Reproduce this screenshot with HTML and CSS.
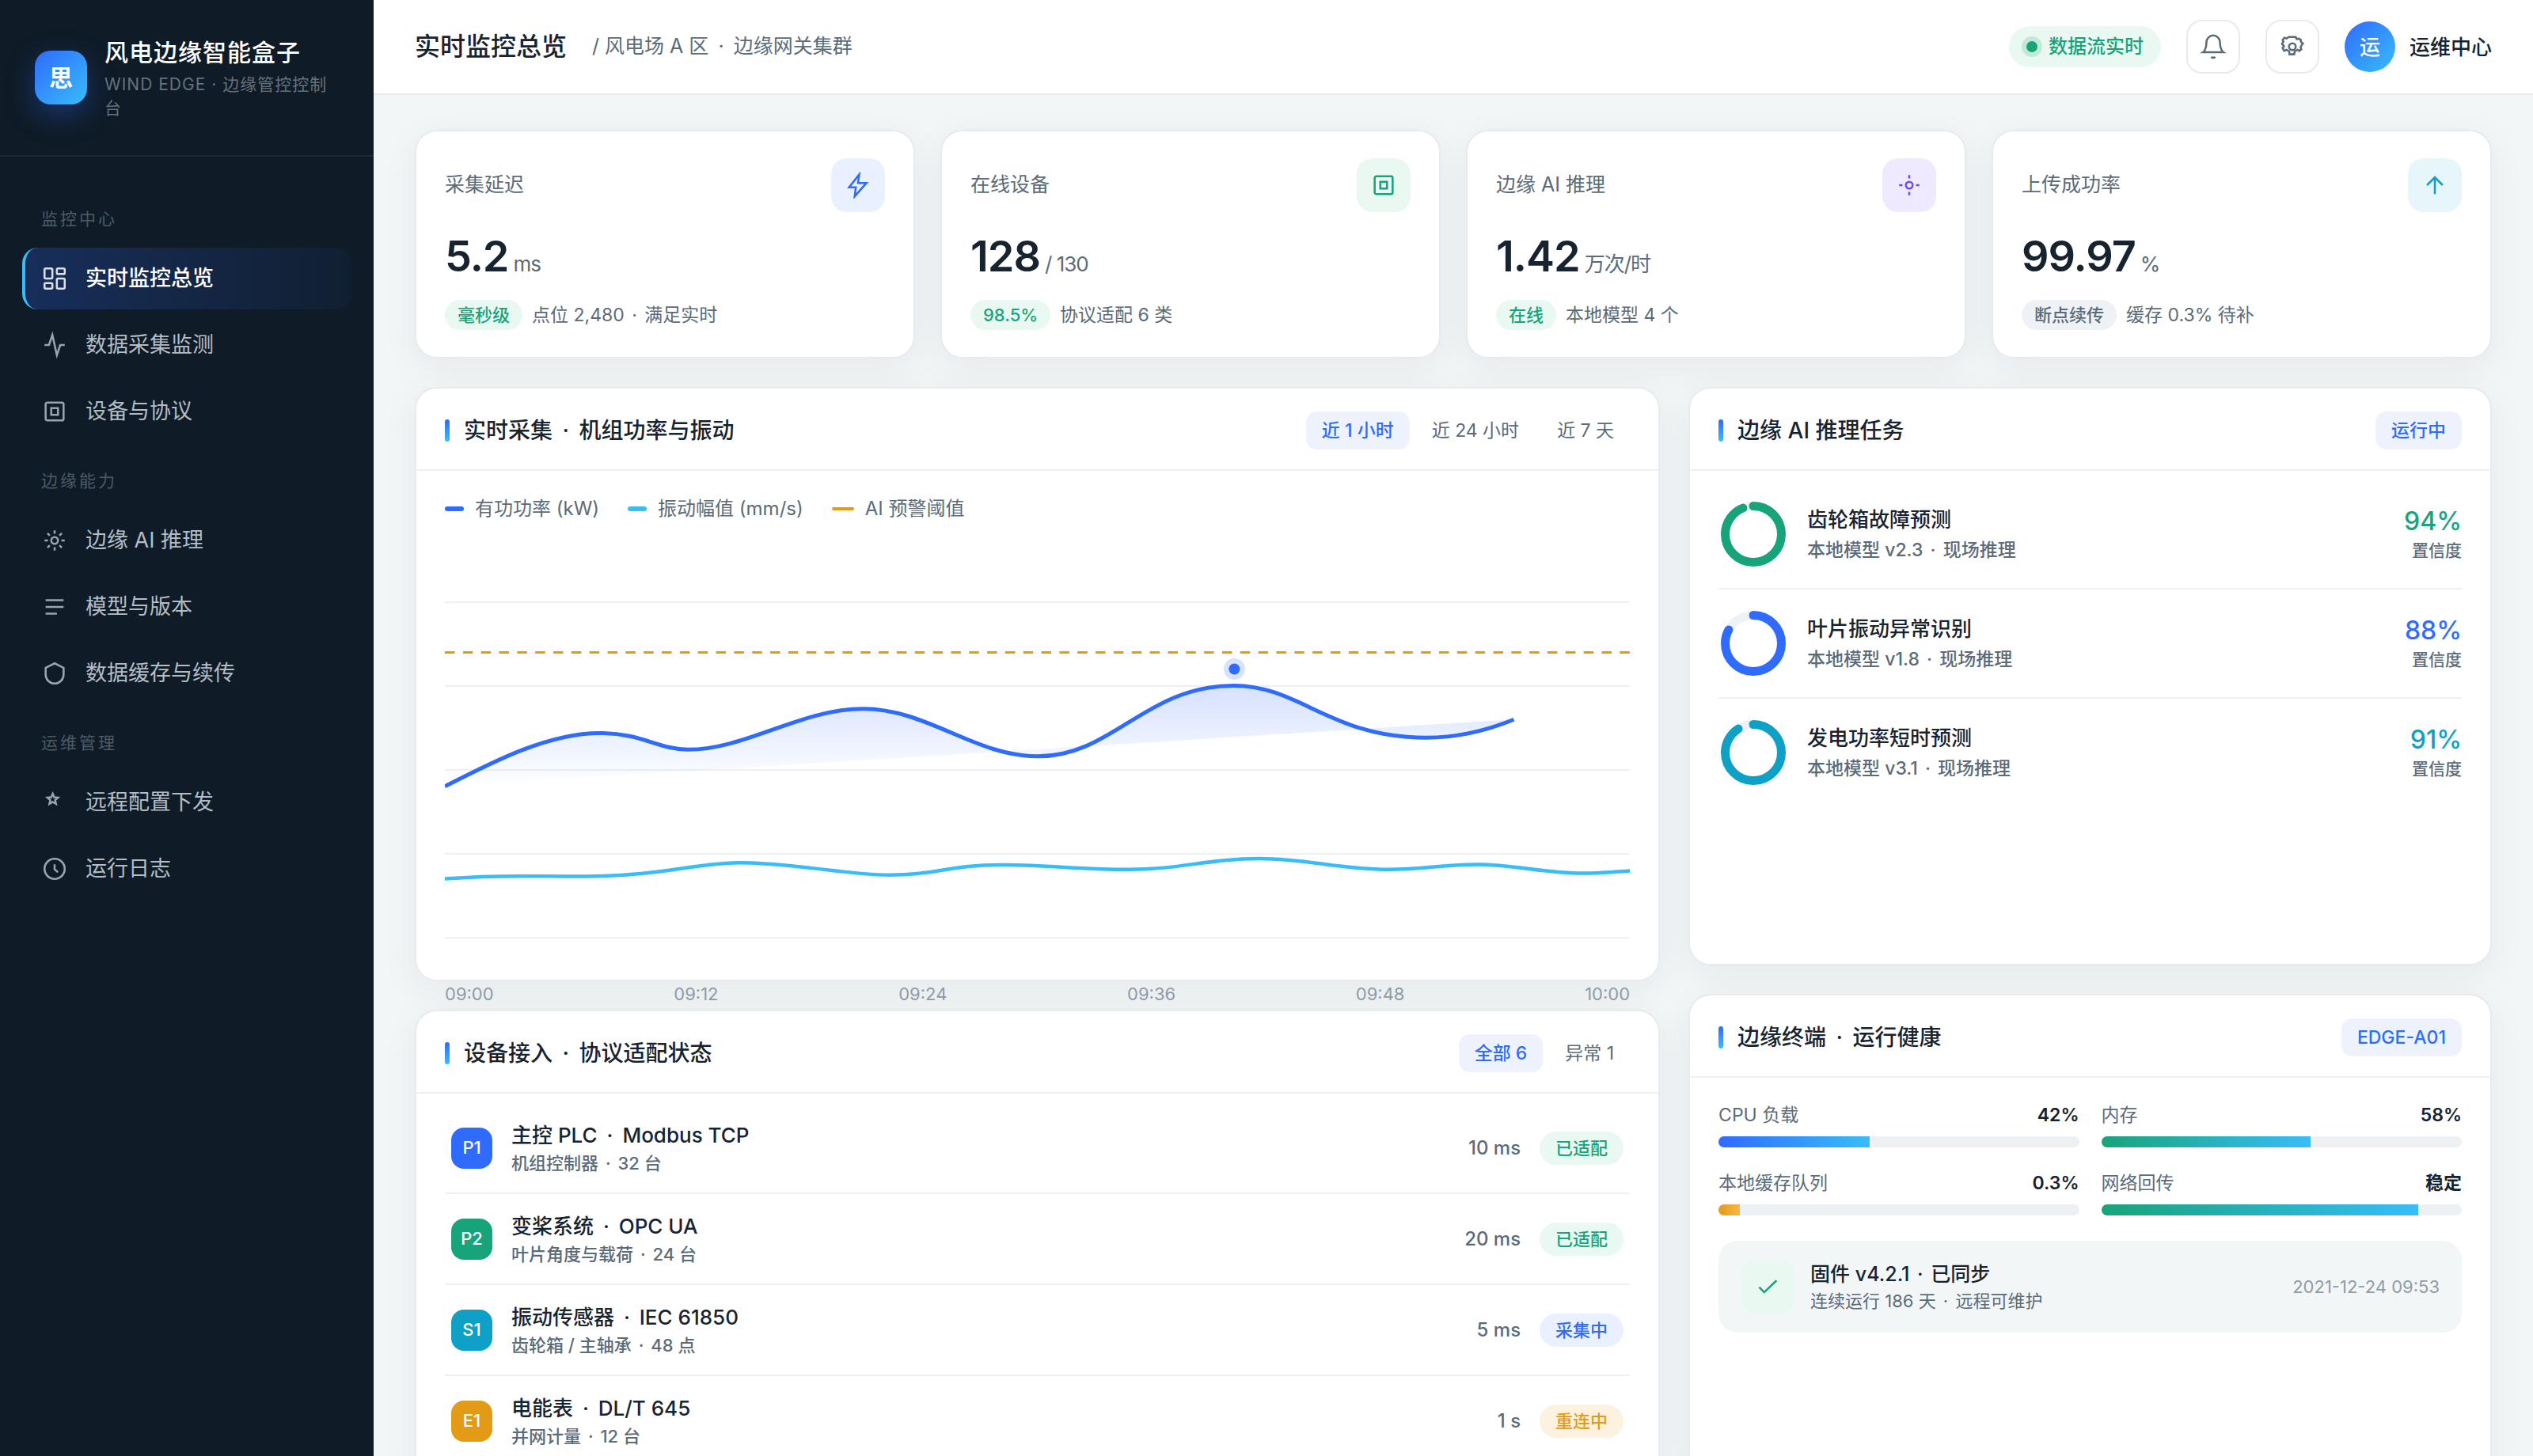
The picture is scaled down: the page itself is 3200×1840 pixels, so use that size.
FILE: index.html
```html
<!DOCTYPE html>
<html lang="zh-CN">
<head>
<meta charset="utf-8">
<meta name="viewport" content="width=device-width, initial-scale=1">
<title>风电边缘智能盒子</title>
<link rel="stylesheet" href="styles.css">
</head>
<body>
<div class="app">
  <aside class="sidebar">
    <div class="brand">
      <div class="brand-logo">思</div>
      <div class="brand-text">
        <div class="brand-name">风电边缘智能盒子</div>
        <div class="brand-sub">WIND EDGE · 边缘管控控制台</div>
      </div>
    </div>
    <nav class="nav">
      <div class="nav-label">监控中心</div>
      <div class="nav-group">
        <a class="nav-item active" href="#"><svg class="icon" viewBox="0 0 24 24"><rect x="3" y="3" width="7" height="9" rx="1"/><rect x="14" y="3" width="7" height="5" rx="1"/><rect x="14" y="12" width="7" height="9" rx="1"/><rect x="3" y="16" width="7" height="5" rx="1"/></svg>实时监控总览</a>
        <a class="nav-item" href="#"><svg class="icon" viewBox="0 0 24 24"><path d="M3 12h4l3-9 4 18 3-9h4"/></svg>数据采集监测</a>
        <a class="nav-item" href="#"><svg class="icon" viewBox="0 0 24 24"><rect x="4" y="4" width="16" height="16" rx="1.5"/><rect x="9" y="9" width="6" height="6"/></svg>设备与协议</a>
      </div>
      <div class="nav-label">边缘能力</div>
      <div class="nav-group">
        <a class="nav-item" href="#"><svg class="icon" viewBox="0 0 24 24"><circle cx="12" cy="12" r="3"/><path d="M12 3v3M12 18v3M3 12h3M18 12h3M5.6 5.6l2.1 2.1M16.3 16.3l2.1 2.1M5.6 18.4l2.1-2.1M16.3 7.7l2.1-2.1"/></svg>边缘 AI 推理</a>
        <a class="nav-item" href="#"><svg class="icon" viewBox="0 0 24 24"><path d="M4 6h16M4 12h16M4 18h10"/></svg>模型与版本</a>
        <a class="nav-item" href="#"><svg class="icon" viewBox="0 0 24 24"><path d="M12 3l8 4v6c0 4.5-3.6 8-8 8s-8-3.5-8-8V7z"/></svg>数据缓存与续传</a>
      </div>
      <div class="nav-label">运维管理</div>
      <div class="nav-group">
        <a class="nav-item" href="#"><svg class="icon" viewBox="0 0 24 24"><path d="M10.3 4.3l1.35 3.1 3.4.35-2.55 2.25.7 3.3-2.9-1.7-2.9 1.7.7-3.3-2.55-2.25 3.4-.35z"/></svg>远程配置下发</a>
        <a class="nav-item" href="#"><svg class="icon" viewBox="0 0 24 24"><circle cx="12" cy="12" r="9"/><path d="M12 8v4.5l3 2.5"/></svg>运行日志</a>
      </div>
    </nav>
  </aside>

  <div class="main">
    <header class="topbar">
      <h1 class="page-title">实时监控总览</h1>
      <span class="crumb">/ 风电场 A 区 <i class="sep wide">·</i> 边缘网关集群</span>
      <div class="topbar-actions">
        <span class="live"><i class="live-dot"></i>数据流实时</span>
        <button class="icon-btn" type="button" aria-label="通知"><svg class="icon" viewBox="0 0 24 24"><path d="M18 8A6 6 0 0 0 6 8c0 7-3 9-3 9h18s-3-2-3-9M13.7 21a2 2 0 0 1-3.4 0"/></svg></button>
        <button class="icon-btn" type="button" aria-label="设置"><svg class="icon" viewBox="0 0 24 24"><circle cx="12" cy="12" r="3"/><path d="M8.9 3.3H15l.8 1.9 2.1-.3 1.6 1 .3 2.1 1.6 1.2-1.2 1.6-.9 1.9.7 1.7-1.900 1.400-1.600-1-2.400 1.400-.5 2.600H9.400l-.2-2.600-2.400-1.400-2.100 1-1.400-2.600 1.200-1.700-1.700-2.100L4 7.500l-.7-1.600L4.900 4l1.900.7z"/></svg></button>
        <div class="user"><span class="avatar">运</span><span>运维中心</span></div>
      </div>
    </header>

    <main class="content">
      <section class="kpis">
        <article class="card kpi">
          <div class="kpi-top"><span>采集延迟</span><span class="kpi-icon blue"><svg class="icon" viewBox="0 0 24 24"><path d="M13 2.5L4 14h6l-1 8 10.5-12H12z"/></svg></span></div>
          <div class="kpi-value">5.2<small>ms</small></div>
          <div class="kpi-foot"><span class="chip green">毫秒级</span><span>点位 2,480 <i class="sep">·</i> 满足实时</span></div>
        </article>
        <article class="card kpi">
          <div class="kpi-top"><span>在线设备</span><span class="kpi-icon green"><svg class="icon" viewBox="0 0 24 24"><rect x="4" y="4" width="16" height="16" rx="1.5"/><rect x="9" y="9" width="6" height="6"/></svg></span></div>
          <div class="kpi-value">128<small>/ 130</small></div>
          <div class="kpi-foot"><span class="chip green">98.5%</span><span>协议适配 6 类</span></div>
        </article>
        <article class="card kpi">
          <div class="kpi-top"><span>边缘 AI 推理</span><span class="kpi-icon purple"><svg class="icon" viewBox="0 0 24 24"><circle cx="12" cy="12" r="3"/><path d="M12 3v3M12 18v3M3 12h3M18 12h3"/></svg></span></div>
          <div class="kpi-value">1.42<small>万次/时</small></div>
          <div class="kpi-foot"><span class="chip green">在线</span><span>本地模型 4 个</span></div>
        </article>
        <article class="card kpi">
          <div class="kpi-top"><span>上传成功率</span><span class="kpi-icon cyan"><svg class="icon" viewBox="0 0 24 24"><path d="M12 20V5M5 12l7-7 7 7"/></svg></span></div>
          <div class="kpi-value">99.97<small>%</small></div>
          <div class="kpi-foot"><span class="chip gray">断点续传</span><span>缓存 0.3% 待补</span></div>
        </article>
      </section>

      <div class="columns">
        <div class="column">
          <section class="card">
            <div class="panel-head">
              <h2><span>实时采集 <i class="sep wide">·</i> 机组功率与振动</span></h2>
              <div class="tabs"><button class="tab on" type="button">近 1 小时</button><button class="tab" type="button">近 24 小时</button><button class="tab" type="button">近 7 天</button></div>
            </div>
            <div class="chart-body">
              <div class="legend">
                <span><i class="swatch power"></i>有功功率 (kW)</span>
                <span><i class="swatch vibration"></i>振动幅值 (mm/s)</span>
                <span><i class="swatch threshold"></i>AI 预警阈值</span>
              </div>
              <svg class="chart" viewBox="0 0 1498 563" preserveAspectRatio="none">
                <defs><linearGradient id="area" x1="0" y1="0" x2="0" y2="1"><stop offset="0" stop-color="#2f6bff" stop-opacity=".2"/><stop offset="1" stop-color="#2f6bff" stop-opacity="0"/></linearGradient></defs>
                <g transform="translate(0 25)" fill="none">
                  <path d="M0 61H1498M0 167H1498M0 273H1498M0 379H1498M0 485H1498" stroke="#eef1f4" stroke-width="2"/>
                  <path d="M0 124.5H1498" stroke="#e39b16" stroke-width="3" stroke-dasharray="12.5 10.35"/>
                  <path fill="url(#area)" d="M0 293.8C60 263 130 226.4 195.6 226.4C250 226.4 270 247.3 307.6 247.3C380 247.3 450 195.8 528.8 195.8C610 195.8 670 255.8 749.8 255.8C845 255.8 885 166.4 997.8 166.4C1080 166.4 1120 232.2 1239.9 232.2C1280 232.2 1315 224 1351.3 209.2z"/>
                  <path stroke="#2f6bff" stroke-width="5" d="M0 293.8C60 263 130 226.4 195.6 226.4C250 226.4 270 247.3 307.6 247.3C380 247.3 450 195.8 528.8 195.8C610 195.8 670 255.8 749.8 255.8C845 255.8 885 166.4 997.8 166.4C1080 166.4 1120 232.2 1239.9 232.2C1280 232.2 1315 224 1351.3 209.2"/>
                  <path stroke="#38bdf8" stroke-width="4.5" d="M0 410.6C40 407.5 70 406.9 110 407.2C130 407.3 150 407.6 179 407.5C275 407 320 390.3 371 390.3C440 390.3 510 405.8 562 405.8C620 405.8 640 393 701 393C760 393 805 398.8 864 398.8C930 398.8 965 385 1030 385C1090 385 1130 398.8 1193 398.8C1240 398.8 1260 392.4 1306 392.4C1350 392.4 1390 403.6 1440 403.6C1465 403.6 1480 401.5 1498 400.4"/>
                  <circle cx="998" cy="145.5" r="13.5" fill="#d6e2ff"/><circle cx="998" cy="145.5" r="7" fill="#2f6bff"/>
                </g>
              </svg>
              <div class="axis"><span>09:00</span><span>09:12</span><span>09:24</span><span>09:36</span><span>09:48</span><span>10:00</span></div>
            </div>
          </section>

          <section class="card">
            <div class="panel-head">
              <h2><span>设备接入 <i class="sep wide">·</i> 协议适配状态</span></h2>
              <div class="tabs"><button class="tab on" type="button">全部 6</button><button class="tab" type="button">异常 1</button></div>
            </div>
            <ul class="rows">
              <li class="device"><span class="tag t-blue">P1</span><div class="info"><b>主控 PLC <i class="sep wide">·</i> Modbus TCP</b><span>机组控制器 <i class="sep">·</i> 32 台</span></div><span class="rate">10 ms</span><span class="status green">已适配</span></li>
              <li class="device"><span class="tag t-green">P2</span><div class="info"><b>变桨系统 <i class="sep wide">·</i> OPC UA</b><span>叶片角度与载荷 <i class="sep">·</i> 24 台</span></div><span class="rate">20 ms</span><span class="status green">已适配</span></li>
              <li class="device"><span class="tag t-cyan">S1</span><div class="info"><b>振动传感器 <i class="sep wide">·</i> IEC 61850</b><span>齿轮箱 / 主轴承 <i class="sep">·</i> 48 点</span></div><span class="rate">5 ms</span><span class="status blue">采集中</span></li>
              <li class="device"><span class="tag t-amber">E1</span><div class="info"><b>电能表 <i class="sep wide">·</i> DL/T 645</b><span>并网计量 <i class="sep">·</i> 12 台</span></div><span class="rate">1 s</span><span class="status amber">重连中</span></li>
            </ul>
          </section>
        </div>

        <div class="column">
          <section class="card tasks">
            <div class="panel-head"><h2>边缘 AI 推理任务</h2><div class="tabs"><button class="tab on" type="button">运行中</button></div></div>
            <ul class="rows">
              <li class="task c-green"><svg class="ring" viewBox="0 0 88 88"><circle class="track" cx="44" cy="44" r="35.5"/><circle class="arc" cx="44" cy="44" r="35.5" pathLength="100" stroke-dasharray="94 100"/></svg><div class="info"><b>齿轮箱故障预测</b><span>本地模型 v2.3 <i class="sep">·</i> 现场推理</span></div><div class="score"><strong>94%</strong><span>置信度</span></div></li>
              <li class="task c-blue"><svg class="ring" viewBox="0 0 88 88"><circle class="track" cx="44" cy="44" r="35.5"/><circle class="arc" cx="44" cy="44" r="35.5" pathLength="100" stroke-dasharray="83 100"/></svg><div class="info"><b>叶片振动异常识别</b><span>本地模型 v1.8 <i class="sep">·</i> 现场推理</span></div><div class="score"><strong>88%</strong><span>置信度</span></div></li>
              <li class="task c-cyan"><svg class="ring" viewBox="0 0 88 88"><circle class="track" cx="44" cy="44" r="35.5"/><circle class="arc" cx="44" cy="44" r="35.5" pathLength="100" stroke-dasharray="91 100"/></svg><div class="info"><b>发电功率短时预测</b><span>本地模型 v3.1 <i class="sep">·</i> 现场推理</span></div><div class="score"><strong>91%</strong><span>置信度</span></div></li>
            </ul>
          </section>

          <section class="card grow">
            <div class="panel-head"><h2><span>边缘终端 <i class="sep wide">·</i> 运行健康</span></h2><div class="tabs"><button class="tab on" type="button">EDGE-A01</button></div></div>
            <div class="health">
              <div class="meters">
                <div class="meter"><div class="meter-top"><span>CPU 负载</span><b>42%</b></div><div class="bar"><i class="f-blue" style="width:42%"></i></div></div>
                <div class="meter"><div class="meter-top"><span>内存</span><b>58%</b></div><div class="bar"><i class="f-green" style="width:58%"></i></div></div>
                <div class="meter"><div class="meter-top"><span>本地缓存队列</span><b>0.3%</b></div><div class="bar"><i class="f-amber" style="width:6%"></i></div></div>
                <div class="meter"><div class="meter-top"><span>网络回传</span><b>稳定</b></div><div class="bar"><i class="f-green" style="width:88%"></i></div></div>
              </div>
              <div class="firmware">
                <span class="kpi-icon green"><svg class="icon" viewBox="0 0 24 24"><path d="M4.5 12.5L9 17 20 6.5"/></svg></span>
                <div class="info"><b>固件 v4.2.1 <i class="sep">·</i> 已同步</b><span>连续运行 186 天 <i class="sep">·</i> 远程可维护</span></div>
                <time>2021-12-24 09:53</time>
              </div>
            </div>
          </section>
        </div>
      </div>
    </main>
  </div>
</div>
</body>
</html>
```
FILE: styles.css
```css
:root {
  --ink: #17232f;
  --muted: #5b6b78;
  --faint: #8f9ca8;
  --line: #e6ebef;
  --line-soft: #eef1f4;
  --bg: #f3f6f7;
  --blue: #2f6bff;
  --sky: #38bdf8;
  --green: #18a47a;
  --cyan: #0ea0c6;
  --amber: #e39b16;
}

* { box-sizing: border-box; }

body {
  margin: 0;
  background: var(--bg);
  color: var(--ink);
  font: 26px/1.5 Inter, "Noto Sans CJK SC", sans-serif;
}

h1, h2, ul { margin: 0; padding: 0; font-weight: 500; }
ul { list-style: none; }
b, strong { font-weight: 500; }
button { font: inherit; color: inherit; border: 0; background: none; padding: 0; cursor: pointer; }
a { color: inherit; text-decoration: none; }

.sep { margin: 0 3px; font-style: normal; }
.sep.wide { margin: 0 5px; }

.icon {
  width: 34px;
  height: 34px;
  flex: none;
  fill: none;
  stroke: currentColor;
  stroke-width: 1.8;
}

.app { display: flex; height: 100vh; overflow: hidden; }

/* Sidebar */
.sidebar { width: 472px; flex: none; background: #0f1b26; color: #b3bdc6; }

.brand {
  display: flex;
  align-items: center;
  gap: 22px;
  padding: 44px;
  border-bottom: 2px solid #1d2935;
}
.brand-logo {
  display: grid;
  place-items: center;
  flex: none;
  width: 66px;
  height: 68px;
  border-radius: 20px;
  background: linear-gradient(135deg, var(--blue), var(--sky));
  box-shadow: 0 12px 36px rgba(47, 107, 255, .35);
  color: #fff;
  font-size: 30px;
  font-weight: 700;
}
.brand-name { color: #fff; font-size: 30px; font-weight: 500; line-height: 44px; letter-spacing: 1px; }
.brand-sub { margin-top: 4px; color: #65727e; font-size: 21px; line-height: 30px; letter-spacing: 1px; }

.nav { padding: 30px 28px; }
.nav-label { padding: 32px 24px 20px; color: #4d5b67; font-size: 21px; line-height: 33px; letter-spacing: 3px; }
.nav-group { display: flex; flex-direction: column; gap: 6px; }
.nav-item {
  display: flex;
  align-items: center;
  gap: 22px;
  height: 78px;
  padding: 0 20px;
  border-left: 4px solid transparent;
  border-radius: 20px;
  font-size: 27px;
}
.nav-item .icon { opacity: .85; }
.nav-item.active {
  border-left-color: var(--sky);
  background: linear-gradient(90deg, rgba(47, 107, 255, .24), rgba(47, 107, 255, .05));
  color: #fff;
  font-weight: 500;
}

/* Top bar */
.main { flex: 1; min-width: 0; }
.topbar {
  display: flex;
  align-items: center;
  gap: 32px;
  height: 120px;
  padding: 0 52px;
  border-bottom: 2px solid var(--line);
  background: #fff;
}
.page-title { font-size: 32px; }
.crumb { color: var(--muted); font-size: 25px; }
.topbar-actions { display: flex; align-items: center; gap: 32px; margin-left: auto; }
.live {
  display: flex;
  align-items: center;
  gap: 14px;
  padding: 8px 22px;
  border-radius: 27px;
  background: #e9f8f1;
  color: var(--green);
  font-size: 24px;
  font-weight: 500;
}
.live-dot { width: 14px; height: 14px; border-radius: 50%; background: var(--green); box-shadow: 0 0 0 6px rgba(24, 164, 122, .18); }
.icon-btn {
  display: grid;
  place-items: center;
  width: 68px;
  height: 68px;
  border: 2px solid var(--line);
  border-radius: 20px;
  color: var(--muted);
}
.user { display: flex; align-items: center; gap: 18px; font-weight: 500; }
.avatar {
  display: grid;
  place-items: center;
  width: 64px;
  height: 64px;
  border-radius: 50%;
  background: linear-gradient(135deg, var(--blue), var(--sky));
  color: #fff;
}

/* Content */
.content { display: flex; flex-direction: column; gap: 36px; padding: 44px 52px; }
.card {
  border: 2px solid var(--line);
  border-radius: 28px;
  background: #fff;
  box-shadow: 0 12px 48px rgba(18, 38, 56, .06);
}

.kpis { display: grid; grid-template-columns: repeat(4, 1fr); gap: 32px; }
.kpi { padding: 34px 36px; }
.kpi-top { display: flex; align-items: center; justify-content: space-between; color: var(--muted); font-size: 25px; }
.kpi-icon { display: grid; place-items: center; flex: none; width: 68px; height: 68px; border-radius: 20px; }
.kpi-value {
  display: flex;
  align-items: baseline;
  gap: 6px;
  margin: 21px 0;
  font-size: 54px;
  font-weight: 600;
  line-height: 69px;
  letter-spacing: -1px;
}
.kpi-value small { color: var(--muted); font-size: 26px; font-weight: 400; line-height: 32px; }
.kpi-foot { display: flex; align-items: center; gap: 12px; color: var(--muted); font-size: 23px; line-height: 38px; }
.chip { padding: 0 16px; border-radius: 19px; font-size: 22px; font-weight: 500; }

.green { background: #e9f8f1; color: var(--green); }
.blue { background: #e9f0ff; color: var(--blue); }
.purple { background: #efeaff; color: #6d4df2; }
.cyan { background: #e6f6fb; color: var(--cyan); }
.gray { background: #eef2f7; color: var(--muted); }
.amber { background: #fdf1df; color: var(--amber); }

.columns { display: grid; grid-template-columns: 1.55fr 1fr; gap: 36px; }
.column { display: flex; flex-direction: column; gap: 36px; min-width: 0; }
.grow { flex: 1; }

.panel-head {
  display: flex;
  align-items: center;
  justify-content: space-between;
  height: 104px;
  padding: 4px 36px 0;
  border-bottom: 2px solid var(--line-soft);
}
.panel-head h2 { display: flex; align-items: center; gap: 18px; font-size: 28px; }
.panel-head h2::before {
  content: "";
  width: 6px;
  height: 28px;
  border-radius: 3px;
  background: linear-gradient(var(--blue), var(--sky));
}
.tabs { display: flex; gap: 8px; }
.tab { padding: 6px 20px; border-radius: 14px; color: var(--muted); font-size: 23px; line-height: 36px; }
.tab.on { background: #edf2fc; color: var(--blue); font-weight: 500; }

/* Chart */
.chart-body { padding: 30px 36px 0; }
.legend { display: flex; gap: 36px; margin-bottom: 14px; color: var(--muted); font-size: 24px; line-height: 36px; }
.legend span { display: flex; align-items: center; gap: 14px; }
.swatch { width: 24px; height: 6px; border-radius: 3px; }
.swatch.power { background: var(--blue); }
.swatch.vibration { background: var(--sky); }
.swatch.threshold { width: 28px; height: 4px; background: var(--amber); }
.chart { display: block; width: 100%; height: 563px; }
/* Time labels hang below the card, in the gap before the next one */
.axis {
  display: flex;
  justify-content: space-between;
  margin: 2px 0 -34px;
  color: var(--faint);
  font-size: 22px;
  line-height: 32px;
}

/* List rows */
.rows { padding: 12px 36px; }
.info { flex: 1; min-width: 0; }
.info b, .info span { display: block; }

.device { display: flex; align-items: center; height: 115px; padding: 0 8px; border-bottom: 2px solid var(--line-soft); }
.device .info b { line-height: 38px; }
.device .info span { color: var(--muted); font-size: 22px; line-height: 32px; }
.tag {
  display: grid;
  place-items: center;
  width: 52px;
  height: 52px;
  margin-right: 24px;
  border-radius: 16px;
  color: #fff;
  font-size: 22px;
  font-weight: 500;
}
.t-blue { background: var(--blue); }
.t-green { background: var(--green); }
.t-cyan { background: var(--cyan); }
.t-amber { background: var(--amber); }
.rate { margin-right: 24px; color: var(--muted); font-size: 24px; }
.status { padding: 0 20px; border-radius: 21px; font-size: 22px; font-weight: 500; line-height: 42px; }

.tasks { min-height: 731px; }
.task { display: flex; align-items: center; gap: 24px; padding: 24px 0; border-bottom: 2px solid var(--line-soft); }
.task:last-child { border-bottom: 0; }
.task .info b { color: var(--ink); line-height: 40px; }
.task .info span { color: var(--muted); font-size: 23px; line-height: 36px; }
.ring { width: 88px; height: 88px; fill: none; stroke-width: 11; transform: rotate(-90deg); }
.track { stroke: #eef2f5; }
.arc { stroke: currentColor; stroke-linecap: round; }
.c-green { color: var(--green); }
.c-blue { color: var(--blue); }
.c-cyan { color: var(--cyan); }
.score { text-align: right; }
.score strong { display: block; font-size: 32px; line-height: 42px; }
.score span { display: block; color: var(--muted); font-size: 21px; line-height: 32px; }

/* Terminal health */
.health { padding: 30px 36px; }
.meters { display: grid; grid-template-columns: 1fr 1fr; gap: 28px; }
.meter-top { display: flex; justify-content: space-between; margin-bottom: 10px; font-size: 23px; line-height: 34px; }
.meter-top span { color: var(--muted); }
.meter-top b { font-weight: 600; }
.bar { height: 14px; overflow: hidden; border-radius: 7px; background: var(--line-soft); }
.bar i { display: block; height: 100%; }
.f-blue { background: linear-gradient(90deg, var(--blue), var(--sky)); }
.f-green { background: linear-gradient(90deg, var(--green), var(--sky)); }
.f-amber { background: linear-gradient(90deg, var(--amber), #f5b94a); }
.firmware {
  display: flex;
  align-items: center;
  gap: 20px;
  margin-top: 32px;
  padding: 24px 28px;
  border-radius: 24px;
  background: var(--bg);
}
.firmware .info b { font-size: 25px; line-height: 36px; }
.firmware .info span { color: var(--muted); font-size: 22px; line-height: 32px; }
.firmware time { color: var(--faint); font-size: 22px; }
```
